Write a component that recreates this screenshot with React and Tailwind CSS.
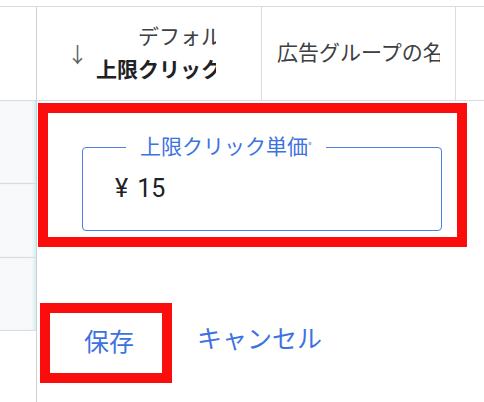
export default function App() {
  const jp = { fontFamily: "Roboto, 'Noto Sans CJK JP', sans-serif" }

  return (
    <div className="w-[484px] h-[402px] bg-white overflow-hidden pt-[6px]" style={jp}>
      <div className="flex h-full border-t border-[#dadce0]">
        {/* left row gutter */}
        <div className="w-[37px] shrink-0 border-r border-[#cfd1d4] flex flex-col">
          <div className="h-[94px] border-b border-[#dadce0] bg-white"></div>
          <div className="h-[83px] border-b border-[#dadce0] bg-[#f8f9fa] shadow-[inset_-3px_0_3px_-1px_rgba(160,220,228,0.45)]"></div>
          <div className="h-[74px] border-b border-[#dadce0] bg-[#f8f9fa] shadow-[inset_-3px_0_3px_-1px_rgba(160,220,228,0.45)]"></div>
          <div className="h-[73px] border-b border-[#dadce0] bg-[#f8f9fa] shadow-[inset_-3px_0_3px_-1px_rgba(160,220,228,0.45)]"></div>
        </div>

        <div className="flex-1 flex flex-col">
          {/* header row */}
          <div className="h-[94px] flex border-b border-[#dadce0] text-[21px] text-[#3c4043]">
            <div className="w-[225px] shrink-0 border-r border-[#dadce0] flex items-center pl-[30px]">
              <span className="w-[16px] text-[21px] leading-none text-[#5f6368] mt-[4px]">↓</span>
              <div className="ml-[13px] w-[120px] overflow-hidden">
                <div className="w-[168px] text-right whitespace-nowrap leading-[33px]">
                  <div>デフォルトの</div>
                  <div className="font-semibold text-[#202124]">上限クリック単価</div>
                </div>
              </div>
            </div>
            <div className="w-[194px] shrink-0 border-r border-[#dadce0] flex items-center pl-[15px]">
              <div className="w-[163px] overflow-hidden whitespace-nowrap">広告グループの名前</div>
            </div>
            <div className="flex-1"></div>
          </div>

          {/* inline editor */}
          <div className="mt-[2px] ml-px w-[429px] border-[10px] border-[#fb0d0d] pl-[34px] pr-[15px] pt-[34px] pb-[6px]">
            <div className="relative h-[84px] border border-[#4a80e8] rounded-[4px] flex items-center pl-[32px]">
              <span className="absolute left-[43px] top-[-16px] bg-white px-[14px] text-[21px] leading-[30px] text-[#3d72e2] whitespace-nowrap">
                上限クリック単価<span className="text-[10px] align-top">°</span>
              </span>
              <span className="text-[25px] text-[#202124] flex items-center">
                <span>¥</span>
                <span className="ml-[9px]">15</span>
              </span>
            </div>
          </div>

          <div className="mt-[56px] ml-[3px] flex items-center">
            <div className="w-[132px] h-[80px] border-[10px] border-[#fb0d0d] flex items-center justify-center pl-[6px]">
              <span className="text-[25px] text-[#3d72e2]">保存</span>
            </div>
            <span className="ml-[25px] text-[25px] text-[#3d72e2] mt-[-6px]">キャンセル</span>
          </div>
        </div>
      </div>
    </div>
  )
}
